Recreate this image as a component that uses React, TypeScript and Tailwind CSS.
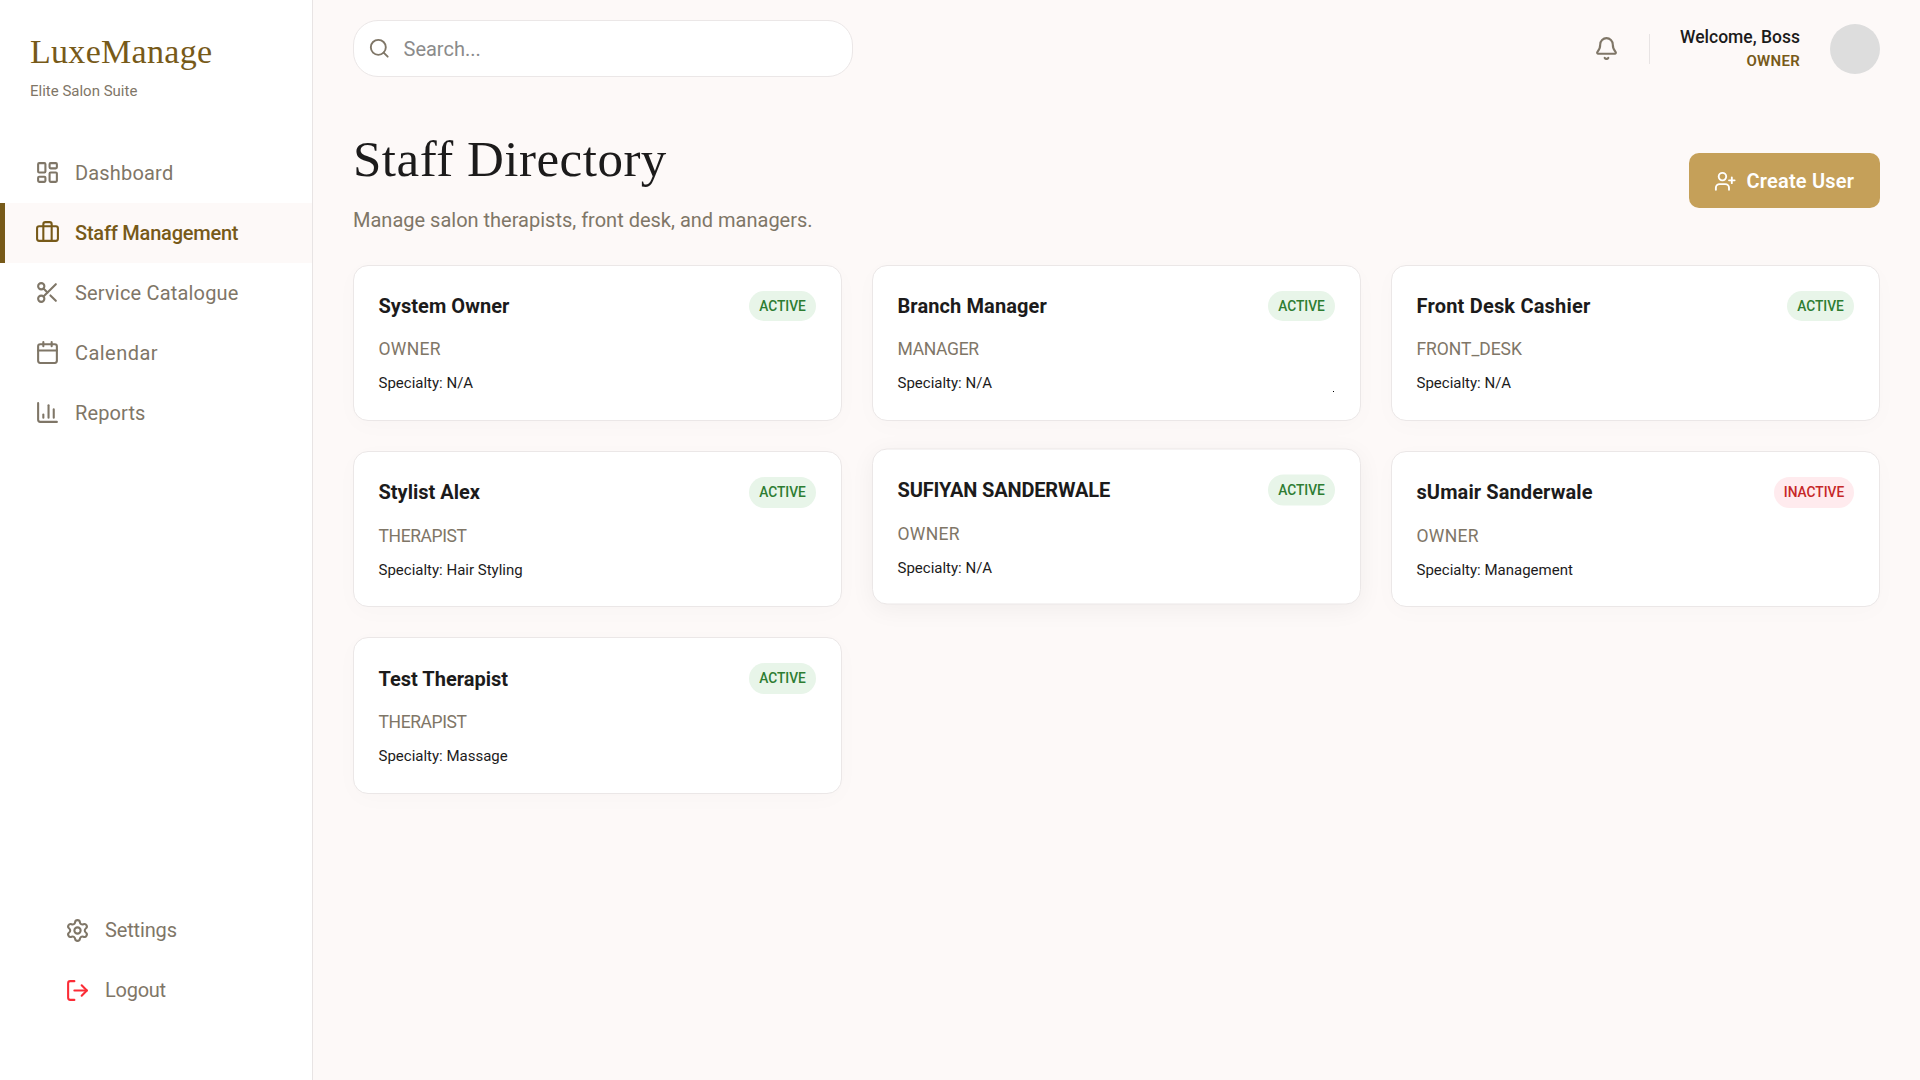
import React, { useState } from 'react';
import {
  Bell,
  Briefcase,
  Calendar,
  ChartColumn,
  LayoutDashboard,
  LogOut,
  Scissors,
  Search,
  Settings,
  UserPlus,
} from 'lucide-react';

const navItems = [
  { label: 'Dashboard', Icon: LayoutDashboard, tracking: 'tracking-[0.18px]' },
  { label: 'Staff Management', Icon: Briefcase, tracking: 'tracking-[-0.22px]' },
  { label: 'Service Catalogue', Icon: Scissors, tracking: 'tracking-[0.18px]' },
  { label: 'Calendar', Icon: Calendar, tracking: 'tracking-[0.45px]' },
  { label: 'Reports', Icon: ChartColumn, tracking: 'tracking-[0.12px]' },
];

const staff = [
  { name: 'System Owner', role: 'OWNER', specialty: 'N/A', active: true },
  { name: 'Branch Manager', role: 'MANAGER', specialty: 'N/A', active: true },
  { name: 'Front Desk Cashier', role: 'FRONT_DESK', specialty: 'N/A', active: true },
  { name: 'Stylist Alex', role: 'THERAPIST', specialty: 'Hair Styling', active: true },
  { name: 'SUFIYAN SANDERWALE', role: 'OWNER', specialty: 'N/A', active: true, raised: true },
  { name: 'sUmair Sanderwale', role: 'OWNER', specialty: 'Management', active: false },
  { name: 'Test Therapist', role: 'THERAPIST', specialty: 'Massage', active: true },
];

const nameTracking: Record<string, string> = {
  'System Owner': 'tracking-[0.05px]',
  'Branch Manager': 'tracking-[0.1px]',
  'Front Desk Cashier': 'tracking-[0.2px]',
  'SUFIYAN SANDERWALE': 'tracking-[-0.15px]',
  'sUmair Sanderwale': 'tracking-[0.1px]',
};

const roleTracking: Record<string, string> = {
  OWNER: 'tracking-[0.3px]',
  MANAGER: 'tracking-[-0.3px]',
  FRONT_DESK: 'tracking-[-0.05px]',
  THERAPIST: 'tracking-[-0.4px]',
};

const App: React.FC = () => {
  const [current, setCurrent] = useState('Staff Management');

  return (
    <div className="flex h-[1080px] w-[1920px] overflow-hidden bg-[#fdf9f8] font-['Roboto',sans-serif] text-[#1c1b1b]">
      <aside className="flex w-[313px] shrink-0 flex-col border-r border-[#e8e4e4] bg-white">
        <div className="px-[30px] pt-[30px]">
          <h1 className="font-['Liberation_Serif',serif] text-[34px] leading-[44px] tracking-[0.3px] text-[#775a19]">
            LuxeManage
          </h1>
          <p className="mt-[6px] text-[15px] leading-[22px] text-[#7f7667]">Elite Salon Suite</p>
        </div>
        <nav className="mt-[41px] flex flex-col">
          {navItems.map(({ label, Icon, tracking }) => (
            <button
              key={label}
              onClick={() => setCurrent(label)}
              className={`flex h-[60px] items-center gap-[15px] border-l-[5px] pl-[30px] text-left text-[20px] ${tracking} ${
                current === label
                  ? 'border-[#775a19] bg-[#fdf9f8] font-medium text-[#775a19]'
                  : 'border-transparent font-normal text-[#7f7667]'
              }`}
            >
              <Icon size={25} className="mb-px" />
              <span>{label}</span>
            </button>
          ))}
        </nav>
        <div className="mt-auto mb-[60px] pl-[65px] text-[20px] text-[#7f7667]">
          <button className="flex h-[60px] items-center gap-[15px]">
            <Settings size={25} />
            <span className="tracking-[-0.15px]">Settings</span>
          </button>
          <button className="flex h-[60px] items-center gap-[15px]">
            <LogOut size={25} className="text-[#fb2c36]" />
            <span className="tracking-[-0.25px]">Logout</span>
          </button>
        </div>
      </aside>

      <main className="flex-1 px-10">
        <header className="flex h-[97px] items-center justify-between">
          <div className="flex h-[57px] w-[500px] items-center gap-[13px] rounded-[25px] border border-[#ebe7e7] bg-white pl-[14px]">
            <Search size={22.5} className="shrink-0 text-[#7f7667]" />
            <input
              type="text"
              placeholder="Search..."
              className="w-full bg-transparent text-[20px] outline-none placeholder:text-[#8b8b8b]"
            />
          </div>
          <div className="flex items-center">
            <Bell size={25} className="text-[#7f7667]" />
            <div className="ml-[30px] h-[30px] w-px bg-[#e8e4e4]" />
            <div className="ml-[30px] text-right">
              <div className="text-[17.5px] leading-[25px] font-medium">Welcome, Boss</div>
              <div className="text-[15px] leading-[22px] font-semibold tracking-[0.3px] text-[#775a19]">OWNER</div>
            </div>
            <div className="ml-[30px] size-[50px] rounded-full bg-[#dddddd]" />
          </div>
        </header>

        <div className="flex h-[168px] items-start justify-between">
          <div className="pt-[31px]">
            <h2 className="font-['Liberation_Serif',serif] text-[51px] leading-[62px] tracking-[0.5px]">Staff Directory</h2>
            <p className="mt-[15px] text-[20px] leading-[30px] text-[#7f7667]">
              Manage salon therapists, front desk, and managers.
            </p>
          </div>
          <button className="mt-[56px] flex h-[55px] w-[191px] items-center gap-[10px] rounded-[10px] bg-[#c5a059] pl-[25px] text-[20px] font-semibold text-white">
            <UserPlus size={22.5} className="mt-px" />
            <span className="tracking-[0.2px]">Create User</span>
          </button>
        </div>

        <div className="grid grid-cols-3 gap-[30px]">
          {staff.map((person) => (
            <div
              key={person.name}
              className={`relative h-[156.2px] rounded-[15px] border border-[#ebe7e7] bg-white pt-[25px] pr-[25px] pl-[24.5px] ${
                person.raised
                  ? '-translate-y-[2.5px] shadow-[0_5px_25px_rgba(0,0,0,0.05)]'
                  : 'shadow-[0_5px_25px_rgba(0,0,0,0.02)]'
              }`}
            >
              <div className="flex h-[30.4px] items-center justify-between">
                <h3 className={`text-[20px] font-bold ${nameTracking[person.name] ?? ''}`}>{person.name}</h3>
                <span
                  className={`flex h-[30.4px] items-center justify-center rounded-full text-[13.75px] font-medium ${
                    person.active ? 'w-[67px] bg-[#e8f5e9] text-[#2e7d32]' : 'w-[80px] bg-[#ffebee] text-[#c62828]'
                  }`}
                >
                  {person.active ? 'ACTIVE' : 'INACTIVE'}
                </span>
              </div>
              <p className={`mt-[15px] text-[17.5px] leading-[26px] text-[#7f7667] ${roleTracking[person.role]}`}>
                {person.role}
              </p>
              <p className="mt-[10px] text-[15px] leading-[22px]">Specialty: {person.specialty}</p>
              {person.role === 'MANAGER' && (
                <span className="absolute right-[26px] bottom-[28px] h-px w-px bg-black" />
              )}
            </div>
          ))}
        </div>
      </main>
    </div>
  );
};

export default App;
